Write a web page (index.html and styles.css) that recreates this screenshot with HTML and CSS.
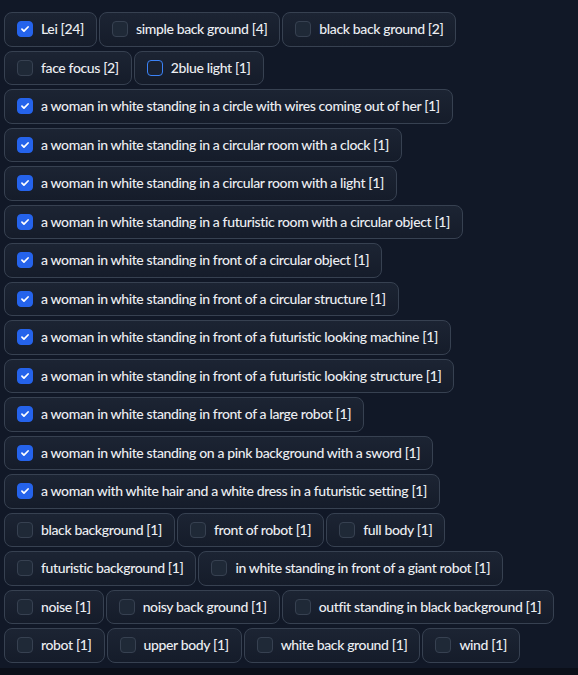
FILE: index.html
```html
<!DOCTYPE html>
<html>
<head>
<meta charset="utf-8">
<link rel="stylesheet" href="styles.css">
</head>
<body>
<div class="panel">
  <div class="group">
    <label class="pill"><span class="box checked"></span><span class="txt">Lei [24]</span></label>
    <label class="pill"><span class="box"></span><span class="txt">simple back ground [4]</span></label>
    <label class="pill"><span class="box"></span><span class="txt">black back ground [2]</span></label>
    <label class="pill"><span class="box"></span><span class="txt">face focus [2]</span></label>
    <label class="pill"><span class="box focus"></span><span class="txt">2blue light [1]</span></label>
    <label class="pill"><span class="box checked"></span><span class="txt">a woman in white standing in a circle with wires coming out of her [1]</span></label>
    <label class="pill"><span class="box checked"></span><span class="txt">a woman in white standing in a circular room with a clock [1]</span></label>
    <label class="pill"><span class="box checked"></span><span class="txt">a woman in white standing in a circular room with a light [1]</span></label>
    <label class="pill"><span class="box checked"></span><span class="txt">a woman in white standing in a futuristic room with a circular object [1]</span></label>
    <label class="pill"><span class="box checked"></span><span class="txt">a woman in white standing in front of a circular object [1]</span></label>
    <label class="pill"><span class="box checked"></span><span class="txt">a woman in white standing in front of a circular structure [1]</span></label>
    <label class="pill"><span class="box checked"></span><span class="txt">a woman in white standing in front of a futuristic looking machine [1]</span></label>
    <label class="pill"><span class="box checked"></span><span class="txt">a woman in white standing in front of a futuristic looking structure [1]</span></label>
    <label class="pill"><span class="box checked"></span><span class="txt">a woman in white standing in front of a large robot [1]</span></label>
    <label class="pill"><span class="box checked"></span><span class="txt">a woman in white standing on a pink background with a sword [1]</span></label>
    <label class="pill"><span class="box checked"></span><span class="txt">a woman with white hair and a white dress in a futuristic setting [1]</span></label>
    <label class="pill"><span class="box"></span><span class="txt">black background [1]</span></label>
    <label class="pill"><span class="box"></span><span class="txt">front of robot [1]</span></label>
    <label class="pill"><span class="box"></span><span class="txt">full body [1]</span></label>
    <label class="pill"><span class="box"></span><span class="txt">futuristic background [1]</span></label>
    <label class="pill"><span class="box"></span><span class="txt">in white standing in front of a giant robot [1]</span></label>
    <label class="pill"><span class="box"></span><span class="txt">noise [1]</span></label>
    <label class="pill"><span class="box"></span><span class="txt">noisy back ground [1]</span></label>
    <label class="pill"><span class="box"></span><span class="txt">outfit standing in black background [1]</span></label>
    <label class="pill"><span class="box"></span><span class="txt">robot [1]</span></label>
    <label class="pill"><span class="box"></span><span class="txt">upper body [1]</span></label>
    <label class="pill"><span class="box"></span><span class="txt">white back ground [1]</span></label>
    <label class="pill"><span class="box"></span><span class="txt">wind [1]</span></label>
  </div>
</div>
</body>
</html>
```
FILE: styles.css
```css
html, body {
  margin: 0;
  padding: 0;
  background: #0b0f19;
}
body {
  font-family: Lato, "Liberation Sans", sans-serif;
  font-size: 14px;
  letter-spacing: -0.37px;
  color: #eceef2;
}
.panel {
  background: #111827;
  padding: 12px 0 6px 4px;
  height: 668px;
  box-sizing: border-box;
}
.group {
  display: flex;
  flex-wrap: wrap;
  column-gap: 2px;
  row-gap: 4px;
  width: 574px;
}
.pill {
  display: flex;
  align-items: center;
  gap: 8px;
  height: 34.5px;
  box-sizing: border-box;
  padding: 0 12px;
  border: 1px solid #374151;
  border-radius: 8px;
  background: linear-gradient(to bottom, #1c2433, #151c2a);
  white-space: nowrap;
}
.box {
  width: 16px;
  height: 16px;
  box-sizing: border-box;
  border: 1px solid #374151;
  border-radius: 4px;
  background: #1f2937;
  flex: none;
}
.box.focus {
  border-color: #3b82f6;
  background: #1a2231;
}
.box.checked {
  border-color: #2563eb;
  background-color: #2563eb;
  background-image: url("data:image/svg+xml,%3Csvg xmlns='http://www.w3.org/2000/svg' viewBox='0 0 16 16'%3E%3Cpath d='M4.5 8.2l2.3 2.3 4.7-4.8' fill='none' stroke='white' stroke-width='2' stroke-linecap='round' stroke-linejoin='round'/%3E%3C/svg%3E");
  background-size: 100% 100%;
}
.txt {
  line-height: 1;
  font-weight: 500;
}
```
